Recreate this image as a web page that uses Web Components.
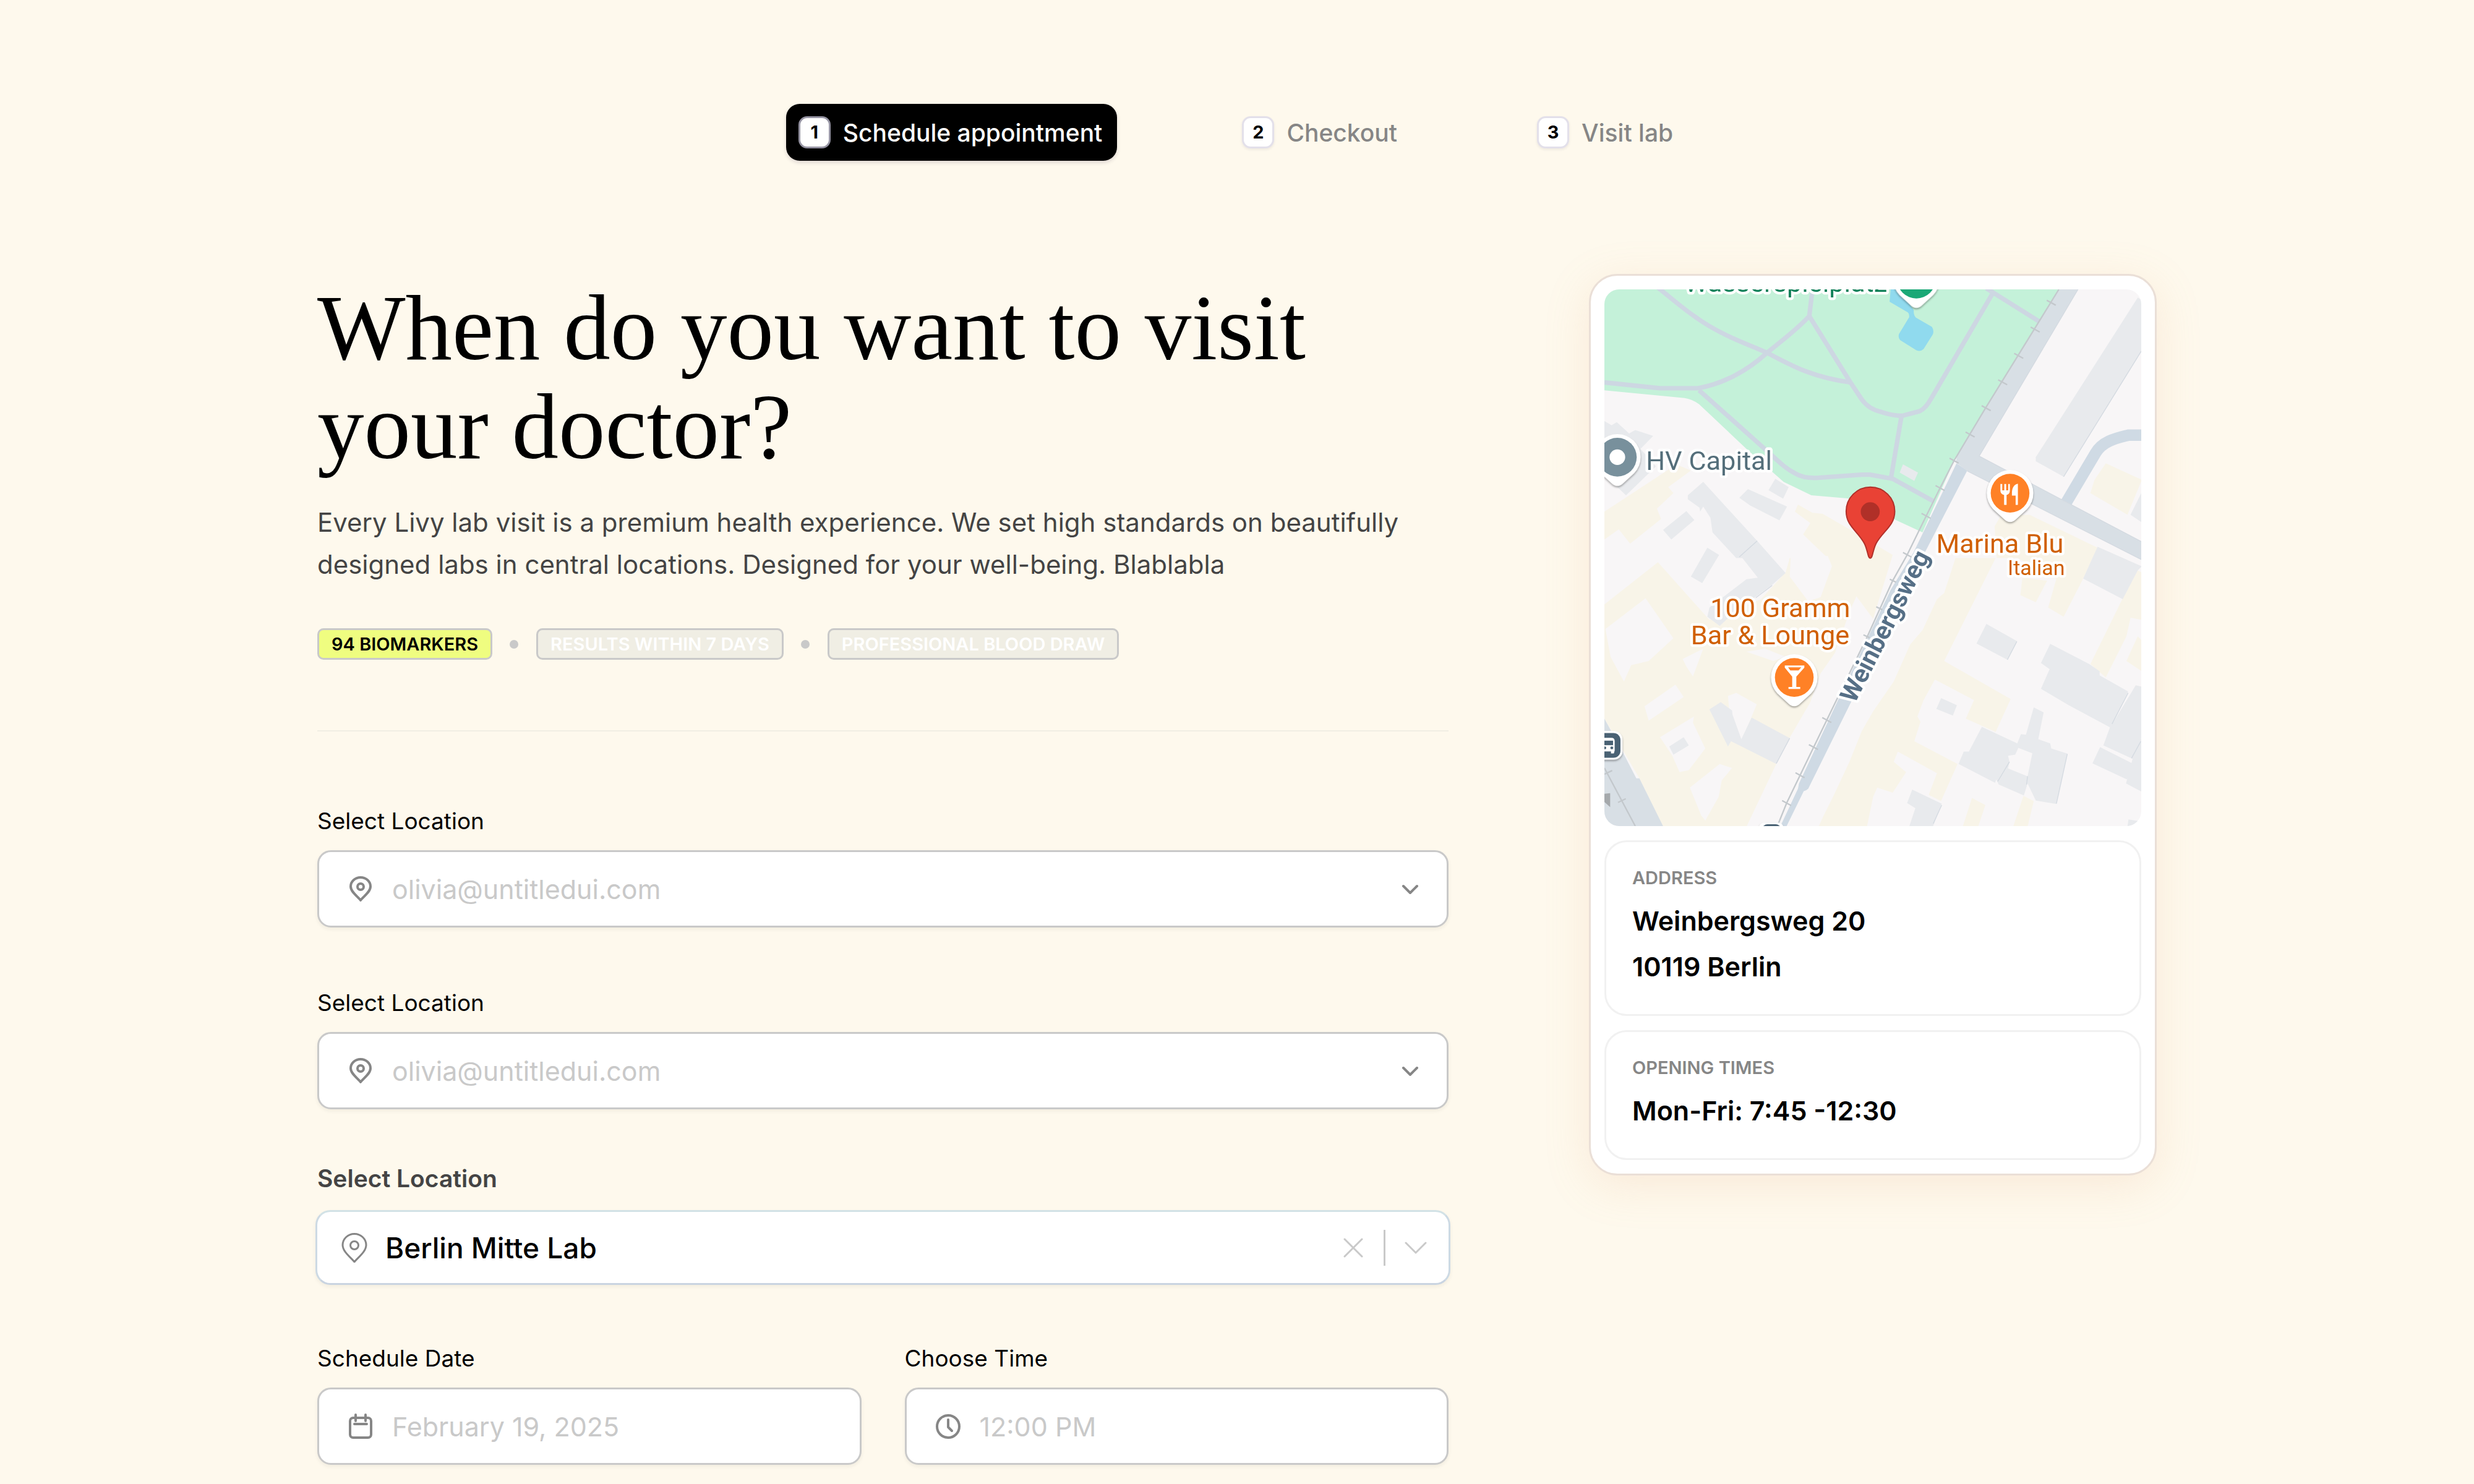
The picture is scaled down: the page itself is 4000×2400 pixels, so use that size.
<!DOCTYPE html>
<html lang="en">
<head>
<meta charset="utf-8">
<meta name="viewport" content="width=device-width, initial-scale=1">
<title>Schedule appointment</title>
<style>
  body {
    margin: 0;
    background: #fef9ed;
    color: #000;
    font-family: Inter, "Liberation Sans", sans-serif;
    --line: #c9c9c9;
    --muted: #868686;
    --text: #444;
  }
</style>
</head>
<body>
<booking-page>
  <step-list slot="steps">
    <step-item number="1" active>Schedule appointment</step-item>
    <step-item number="2">Checkout</step-item>
    <step-item number="3">Visit lab</step-item>
  </step-list>

  <page-intro>
    <span slot="title">When do you want to visit your doctor?</span>
    Every Livy lab visit is a premium health experience. We set high standards on beautifully designed labs in central locations. Designed for your well-being. Blablabla
    <lab-tag slot="tags" active>94 BIOMARKERS</lab-tag>
    <lab-tag slot="tags">RESULTS WITHIN 7 DAYS</lab-tag>
    <lab-tag slot="tags">PROFESSIONAL BLOOD DRAW</lab-tag>
  </page-intro>

  <booking-form></booking-form>

  <lab-card slot="aside">
    <lab-map></lab-map>
    <info-block label="ADDRESS">Weinbergsweg 20<br>10119 Berlin</info-block>
    <info-block label="OPENING TIMES">Mon-Fri: 7:45 -12:30</info-block>
  </lab-card>
</booking-page>

<template id="booking-page">
  <style>
    :host {
      display: block;
      padding: 168px 40px 28px;
    }
    .layout {
      display: grid;
      grid-template-columns: minmax(0, 1829fr) minmax(0, 918fr);
      gap: 227px;
      align-items: start;
      max-width: 2974px;
      margin: 183px auto 0;
    }
  </style>
  <slot name="steps"></slot>
  <div class="layout">
    <main><slot></slot></main>
    <aside><slot name="aside"></slot></aside>
  </div>
</template>

<template id="step-list">
  <style>
    :host { display: block; }
    nav {
      display: flex;
      justify-content: center;
      gap: 182px;
    }
  </style>
  <nav aria-label="Progress"><slot></slot></nav>
</template>

<template id="step-item">
  <style>
    :host { display: block; }
    a {
      display: flex;
      align-items: center;
      gap: 20px;
      height: 92px;
      padding: 0 24px 0 20px;
      border-radius: 22px;
      color: var(--muted);
      font-size: 39px;
      font-weight: 500;
      text-decoration: none;
      white-space: nowrap;
    }
    b {
      box-sizing: border-box;
      width: 52px;
      height: 52px;
      border: 3px solid #e3e0ea;
      border-radius: 14px;
      background: #fff;
      color: #000;
      font-size: 29px;
      font-weight: 700;
      line-height: 46px;
      text-align: center;
      box-shadow: 0 2px 4px rgba(30, 20, 60, .08);
    }
    :host([active]) a {
      background: #000;
      color: #fff;
      box-shadow: 0 3px 6px rgba(40, 20, 60, .15);
    }
    :host([active]) b { border-color: #9694a3; }
  </style>
  <a href="#"><b></b><span><slot></slot></span></a>
</template>

<template id="page-intro">
  <style>
    :host {
      display: block;
      padding: 7px 0 114px;
      border-bottom: 2px solid #f1eee3;
    }
    h1 {
      margin: 0;
      font: 400 151px/160px "Liberation Serif", serif;
    }
    p {
      margin: 41px 0 69px;
      color: var(--text);
      font-size: 42px;
      line-height: 68px;
    }
    .tags {
      display: flex;
      gap: 71px;
    }
  </style>
  <h1><slot name="title"></slot></h1>
  <p><slot></slot></p>
  <div class="tags"><slot name="tags"></slot></div>
</template>

<template id="lab-tag">
  <style>
    :host {
      position: relative;
      padding: 0 20px;
      border: 3px solid var(--line);
      border-radius: 10px;
      background: #f0eee4;
      color: #fff;
      font-size: 29px;
      font-weight: 600;
      line-height: 45px;
      white-space: nowrap;
    }
    :host([active]) {
      background: #effd80;
      color: #000;
    }
    /* dot halfway between two tags */
    :host(:not([active]))::before {
      content: "";
      position: absolute;
      top: 16px;
      left: -46px;
      width: 14px;
      height: 14px;
      border-radius: 50%;
      background: var(--line);
    }
  </style>
  <slot></slot>
</template>

<template id="booking-form">
  <style>
    :host { display: block; padding-top: 115px; }
    form { display: grid; }
    .fields { display: grid; gap: 92px; }
    pick-field { margin: 82px -3px 0; }
    .row {
      display: grid;
      grid-template-columns: 1fr 1fr;
      gap: 70px;
      margin-top: 89px;
    }
  </style>
  <form>
    <div class="fields">
      <form-field kind="select" icon="pin" label="Select Location" value="olivia@untitledui.com"></form-field>
      <form-field kind="select" icon="pin" label="Select Location" value="olivia@untitledui.com"></form-field>
    </div>
    <pick-field label="Select Location" value="Berlin Mitte Lab"></pick-field>
    <div class="row">
      <form-field kind="text" icon="calendar" label="Schedule Date" value="February 19, 2025"></form-field>
      <form-field kind="text" icon="clock" label="Choose Time" value="12:00 PM"></form-field>
    </div>
  </form>
</template>

<template id="form-field">
  <style>
    :host { display: block; }
    label {
      display: block;
      margin-bottom: 17px;
      font-size: 37px;
      line-height: 60px;
    }
    .box {
      display: flex;
      align-items: center;
      box-sizing: border-box;
      height: 125px;
      padding: 0 36px 0 44px;
      border: 3px solid var(--line);
      border-radius: 22px;
      background: #fff;
      box-shadow: 0 3px 6px rgba(40, 30, 20, .06);
    }
    svg {
      flex: none;
      width: 46px;
      height: 46px;
      fill: none;
      stroke: var(--muted);
      stroke-width: 4;
      stroke-linecap: round;
      stroke-linejoin: round;
    }
    select, input {
      flex: 1;
      min-width: 0;
      margin: 0 0 0 28px;
      padding: 0;
      border: 0;
      outline: 0;
      appearance: none;
      background: none;
      color: var(--line);
      font: 400 43px/60px Inter, "Liberation Sans", sans-serif;
    }
    input::placeholder { color: var(--line); opacity: 1; }
  </style>
  <label for="control"></label>
  <div class="box"></div>
</template>

<template id="pick-field">
  <style>
    :host { display: block; }
    label {
      display: block;
      margin: 0 3px 21px;
      color: var(--text);
      font-size: 39px;
      font-weight: 600;
      line-height: 60px;
    }
    .box {
      display: flex;
      align-items: center;
      box-sizing: border-box;
      height: 121px;
      padding: 0 29px 0 36px;
      border: 3px solid;
      border-color: #d2e2e6 #cddae4 #c9d4e1;
      border-radius: 24px;
      background: #fff;
      box-shadow: 0 3px 6px rgba(40, 30, 20, .06);
    }
    svg {
      display: block;
      flex: none;
      width: 48px;
      height: 48px;
      fill: none;
      stroke: var(--line);
      stroke-width: 3;
      stroke-linecap: round;
      stroke-linejoin: round;
    }
    .pin { stroke: var(--muted); }
    select {
      flex: 1;
      min-width: 0;
      margin: 0 0 0 26px;
      padding: 0;
      border: 0;
      appearance: none;
      background: none;
      color: #000;
      font: 500 46px/60px Inter, "Liberation Sans", sans-serif;
    }
    button {
      padding: 0;
      border: 0;
      background: none;
    }
    i {
      width: 3px;
      height: 58px;
      margin: 0 25px;
      background: var(--line);
    }
  </style>
  <label for="control"></label>
  <div class="box">
    <svg class="pin" viewBox="0 0 48 48"><path d="M24 47C20 41 5 31 5 19.500a19 18 0 0 1 38 0c0 11.500-15 21.500-19 27.500z"/><circle cx="24" cy="20" r="6.500"/></svg>
    <select id="control"><option></option></select>
    <button type="button" aria-label="Clear"><svg viewBox="0 0 48 48"><path d="M10 10l28 28M38 10L10 38"/></svg></button>
    <i></i>
    <svg viewBox="0 0 48 48"><path d="M8 16l16 16 16-16"/></svg>
  </div>
</template>

<template id="lab-card">
  <style>
    :host {
      display: grid;
      gap: 23px;
      padding: 22px;
      border: 3px solid #eadfd7;
      border-radius: 46px;
      background: #fff;
      box-shadow: 0 16px 72px rgba(225, 160, 110, .17);
    }
  </style>
  <slot></slot>
</template>

<template id="info-block">
  <style>
    :host {
      display: block;
      padding: 38px 42px 24px;
      border: 3px solid #f1f1f1;
      border-radius: 36px;
    }
    h2 {
      margin: 0 0 12px;
      color: var(--muted);
      font-size: 29px;
      font-weight: 600;
      line-height: 40px;
    }
    p {
      margin: 0;
      padding-bottom: 16px;
      font-size: 43px;
      font-weight: 600;
      line-height: 74px;
    }
  </style>
  <h2></h2>
  <p><slot></slot></p>
</template>

<template id="lab-map">
  <style>
    :host { display: block; }
    svg {
      display: block;
      width: 100%;
      border-radius: 24px;
      background: #f8f6f7;
    }
    .park { fill: #c4f1d9; }
    .water { fill: #90daee; }
    .grey { fill: #e8eaed; }
    .cream { fill: #f8f4e8; }
    .gap { fill: #f8f6f7; }
    .road { fill: #d8dfe5; }
    .lane { fill: #cfdae4; }
    .walk { fill: none; stroke: #cdd7e2; stroke-width: 22; stroke-linejoin: round; }
    .rail { fill: none; stroke: #c3c8cc; stroke-width: 7; }
    .edge { fill: none; stroke: #d4dae1; stroke-width: 4; }
    .pin { filter: drop-shadow(0 6px 5px rgba(0, 0, 0, .35)); fill: #fff; }
    text {
      font-family: Roboto, sans-serif;
      font-size: 130px;
      stroke: #fff;
      stroke-width: 26px;
      stroke-linejoin: round;
      paint-order: stroke;
    }
    .food { fill: #d05f00; text-anchor: end; }
  </style>
  <svg viewBox="0 0 2607 2607" role="img" aria-label="Map of Weinbergsweg">
    <defs>
      <path id="drop" d="M0 140C-12 140-20 134-28 127L-82 78A113 113 0 1 1 82 78L28 127C20 134 12 140 0 140Z"/>
    </defs>

    <path class="park" d="M0 0H2210L1698 832L1545 1180L1415 1120L1290 1040L1180 1015L1005 1000L870 935L690 775L460 558Q430 535 390 528L0 490Z"/>
    <path class="grey" d="M1450 850L1523 890L1505 930L1434 890Z"/>
    <path class="water" d="M1390 0L1385 60L1470 110Q1481 115 1480 135L1430 218Q1426 235 1436 246L1515 296Q1535 304 1550 290L1594 220Q1603 200 1590 182L1512 137Q1501 125 1502 100L1430 0Z"/>
    <g class="walk">
      <path d="M260-8C330 45 380 95 480 160S680 260 790 308C900 365 1000 425 1195 452"/>
      <path d="M0 452L270 480H455C570 460 690 400 790 308C860 250 930 200 995 130L1008 20"/>
      <path d="M995 130L1195 452L1250 535Q1285 582 1340 594Q1400 614 1445 614L1530 592Q1560 580 1590 525L1885 20"/>
      <path d="M460 490L790 785C850 840 880 870 925 893Q970 920 1040 915L1250 900H1290L1400 920L1600 1030"/>
      <path d="M1443 614L1392 915M1855-5L2110 155"/>
    </g>

    <!-- buildings, north west -->
    <path class="grey" d="M0 640L35 660L60 645L120 700L150 683L237 712L175 775L250 860L105 1000L0 900Z"/>
    <path class="cream" d="M0 1080L350 850L420 880L310 960L335 990L255 1065L275 1115L125 1235L70 1165L0 1215Z"/>
    <path class="cream" d="M940 1045L1010 1085L1060 1090L1190 1165L1400 1290L1305 1600L1090 1310L965 1190L1000 1135L925 1080Z"/>
    <path class="grey" d="M285 1168L398 1077L437 1120L325 1215ZM655 1012L697 970L887 1055L850 1122L708 1050ZM830 920L895 960L868 1017L797 975Z"/>

    <!-- blocks, south west -->
    <g transform="translate(0 1305)">
      <path class="cream" d="M0 225L260 20L510 300L760 200L880 70L900 0H1305L1290 40L1195 250L1120 460L1050 560L1000 700L890 890L830 1010L690 1305H285L170 1070L0 780Z"/>
      <path class="gap" d="M905-10H1085L1105 40L1050 190L990 210L900 90ZM5 345L200 195L335 390L215 500L130 520L95 600L30 480ZM380 490L480 440L430 575L400 530ZM195 720L345 615L385 675L215 790ZM600 670L640 655L740 710L665 890L610 780ZM270 870L435 770L430 800L490 925L410 1030L365 1040L330 960ZM415 1115L560 1000L620 1020L570 1080L555 1160L490 1275L470 1250ZM690 455L780 440L880 480L820 500Z"/>
      <path class="grey" d="M500-50L557-15L475 122L420 90ZM510 735L565 700L620 740L622 760L665 880L715 775L900 875L835 1000L615 890L600 915ZM315 915L385 870L410 910L335 955Z"/>
    </g>
    <path class="grey" d="M405 1000L480 935L742 1222L880 1378L815 1435L740 1490L650 1550L560 1635L500 1590L510 1545L690 1408L745 1400L670 1305L640 1305L525 1180L515 1110L480 1055L465 1080L462 1060L405 1020Z"/>
    <path class="edge" d="M742 1222L655 1300M815 1438L735 1498M900 2180L835 2303"/>

    <!-- blocks, south east -->
    <g transform="translate(1305 1305)">
      <path class="cream" d="M400 0H595L345 500L668 685L595 845L450 780L490 690L300 590L245 690L215 770L230 795L200 890L410 1000L330 1180L270 1150L310 1045L120 940L100 990L160 1040L95 1140L20 1115L0 1160L-30 1305H-265L-240 1250L-190 1150L-115 990L-55 840L0 745L100 600L180 420L240 350L310 200L345 170Z"/>
      <path class="cream" d="M725 95L845 110L790 215L715 180ZM600 0L590-155L620-205L760-210L1090-50L1020 100L925 285L850 240L890 100L700 0ZM1285 60L1305 70V300L1250 290L1230 380L1130 580L1055 515L1210 200ZM1285 380L1305 400V550L1230 500ZM480 1165L545 1200L510 1305H435ZM730 1155L780 1180L750 1305H680Z"/>
      <path class="cream" d="M1130-460L1305-380L1235-210L1055-315L1075-380Z"/>
      <path class="grey" d="M1065 0L1090-55L1305 40L1285 60L1212 200L1020 100ZM550 320L698 403L652 494L502 415ZM860 417L1050 515L1100 550V570L1238 648L1160 808L1305 880V1135L1228 1095L1260 975L1118 910L1150 822L950 715L815 635L857 540L815 510ZM1275 618L1305 625V880L1160 808L1250 660ZM1102 918L1270 1003L1232 1075L1065 997ZM330 680L407 715L387 765L307 733ZM780 725L828 750L802 880L860 900L865 925L943 950L890 1195L790 1178L750 1095L732 1153L610 1100L598 1075L592 1092L415 1000L440 940H465L528 820L700 900L718 855L742 858ZM190 1125L333 1193L290 1305H175L205 1215L165 1190ZM1240 1270L1305 1280V1305H1235Z"/>
      <path class="gap" d="M705 922L773 948L750 1060L655 1022L662 990L655 960L690 955Z"/>
      <path class="edge" d="M1238 655L1160 806M1300 890L1255 972M652 494L698 405M662 990L605 1085M750 1060L745 1100M943 952L890 1193M333 1200L292 1290"/>
    </g>
    <path class="grey" d="M2590 40L2607 50V300L2230 910L2095 835V815Z"/>
    <path class="edge" d="M2607 300L2230 910"/>
    <path class="grey" d="M2607 990L2555 1095L2607 1130Z"/>

    <!-- streets -->
    <path d="M2240 1040L2385 795C2420 735 2490 722 2545 708H2615" fill="none" stroke="#cfdae4" stroke-width="56"/>
    <path class="lane" d="M1710 845L1762 880L1550 1290L1490 1400L1200 2000L990 2425Q980 2435 968 2437L885 2607H855L940 2425L945 2400L1130 2005L1390 1460L1500 1280Z"/>
    <path class="road" d="M2210 0H2300L1820 810L2607 1225V1312L1762 882L1706 840L1715 800Z"/>
    <path class="edge" d="M2300 0L1820 810L2607 1225M1762 882L2607 1312"/>
    <path class="road" d="M0 2085L80 2230L155 2375H170L285 2607H0Z"/>
    <path class="rail" d="M2207 0L1850 578L1698 832L1630 965L1563 1100L1470 1290L1400 1415L1275 1690L1080 2092L885 2495L840 2607M0 2325L150 2607"/>
    <path class="rail" d="M2148 53l44 24M2070 183l44 24M1990 311l44 24M1912 439l44 24M1832 565l44 24M1754 693l44 24M1676 820l44 24M1608 953l44 24M1540 1088l44 24M1450 1278l44 24M1386 1408l30 14M1320 1542l30 14M1258 1678l30 14M1058 2080l44 24M993 2211l44 24M928 2348l44 24M863 2483l44 24M0 2355l38-18M66 2492l38-18"/>
    <path d="M0 2450L28 2447V2515L0 2490Z" fill="#a5a9ac"/>

    <g class="pin">
      <use href="#drop" x="1515" y="-50"/>
      <use href="#drop" x="63" y="815"/>
      <use href="#drop" x="1970" y="990"/>
      <use href="#drop" x="922" y="1885"/>
      <rect x="-60" y="2145" width="148" height="140" rx="42"/>
      <rect x="750" y="2590" width="120" height="60" rx="26"/>
    </g>
    <circle cx="1515" cy="-50" r="94" fill="#1aa876"/>
    <circle cx="63" cy="815" r="94" fill="#78909c"/>
    <circle cx="63" cy="815" r="38" fill="#fff"/>
    <circle cx="1970" cy="990" r="94" fill="#ff8126"/>
    <circle cx="922" cy="1885" r="94" fill="#ff8126"/>
    <path transform="translate(1970 990)" fill="#fff" d="M-47-45H-38V-14H-28V-45H-19V-14H-9V-45H-1V-12Q-1 4-17 9V57H-29V9Q-47 4-47-12ZM38-46V57H27V12H9V0C9-24 18-42 38-46Z"/>
    <path transform="translate(922 1885)" fill="#fff" fill-rule="evenodd" d="M-46-58H49V-48L10-4V46H29V56H-28V46H-10V-4L-46-48ZM-30-49L-19-34H21L34-49Z"/>
    <rect x="-50" y="2155" width="128" height="120" rx="34" fill="#4a6274"/>
    <path fill="#fff" d="M0 2178H34Q50 2178 50 2194V2240L46 2254H32V2244H0Z"/>
    <path fill="#4a6274" d="M0 2192H42V2214H0Z"/>
    <circle cx="36" cy="2227" r="7" fill="#4a6274"/>
    <circle cx="2" cy="2227" r="7" fill="#4a6274"/>
    <rect x="768" y="2598" width="88" height="60" rx="24" fill="#4a6274"/>

    <path d="M1291 1306C1279 1306 1280 1270 1263 1235C1232 1175 1174 1150 1174 1078A117 117 0 0 1 1410 1078C1410 1150 1350 1175 1319 1235C1302 1270 1303 1306 1291 1306Z" fill="#e94235" stroke="#b1302a" stroke-width="6"/>
    <circle cx="1291" cy="1080" r="46" fill="#b03028"/>

    <text x="388" y="13" fill="#12815a">Wasserspielplatz</text>
    <text x="202" y="878" fill="#546e7a">HV Capital</text>
    <text class="food" x="2230" y="1279">Marina Blu</text>
    <text class="food" x="2236" y="1387" style="font-size: 102px">Italian</text>
    <text class="food" x="1194" y="1593">100 Gramm</text>
    <text class="food" x="1190" y="1724">Bar &amp; Lounge</text>
    <text transform="translate(1216 2014) rotate(-63)" fill="#566f86" style="font-size: 122px; font-weight: 700">Weinbergsweg</text>
  </svg>
</template>

<script>
const icons = {
  pin: `<path d="M23 41C19 35 7 28 7 18.500a16 14.500 0 0 1 32 0C39 28 27 35 23 41z"/><circle cx="23" cy="19" r="5"/>`,
  calendar: `<rect x="6" y="9" width="34" height="32" rx="5"/><path d="M15 4v10M31 4v10M13 19h20"/>`,
  clock: `<circle cx="23" cy="23" r="18"/><path d="M23 12v12l6 6"/>`,
  chevron: `<path d="M12 18l11 11 11-11"/>`,
};

function svg(name) {
  return `<svg viewBox="0 0 46 46" aria-hidden="true">${icons[name]}</svg>`;
}

class TemplateElement extends HTMLElement {
  constructor() {
    super();
    const template = document.getElementById(this.localName);
    this.attachShadow({ mode: "open" });
    this.shadowRoot.appendChild(template.content.cloneNode(true));
  }
}

class StepItem extends TemplateElement {
  connectedCallback() {
    this.shadowRoot.querySelector("b").textContent = this.getAttribute("number");
    if (this.hasAttribute("active")) {
      this.shadowRoot.querySelector("a").setAttribute("aria-current", "step");
    }
  }
}

class InfoBlock extends TemplateElement {
  connectedCallback() {
    this.shadowRoot.querySelector("h2").textContent = this.getAttribute("label");
  }
}

class FormField extends TemplateElement {
  connectedCallback() {
    const value = this.getAttribute("value");
    const box = this.shadowRoot.querySelector(".box");
    this.shadowRoot.querySelector("label").textContent = this.getAttribute("label");
    if (this.getAttribute("kind") === "select") {
      box.innerHTML = `${svg(this.getAttribute("icon"))}
        <select id="control"><option>${value}</option></select>
        ${svg("chevron")}`;
    } else {
      box.innerHTML = `${svg(this.getAttribute("icon"))}
        <input id="control" type="text" placeholder="${value}">`;
    }
  }
}

class PickField extends TemplateElement {
  connectedCallback() {
    const option = this.shadowRoot.querySelector("option");
    this.shadowRoot.querySelector("label").textContent = this.getAttribute("label");
    option.textContent = this.getAttribute("value");
    this.shadowRoot.querySelector("button").addEventListener("click", () => {
      option.textContent = "";
    });
  }
}

window.customElements.define("booking-page", class extends TemplateElement {});
window.customElements.define("step-list", class extends TemplateElement {});
window.customElements.define("step-item", StepItem);
window.customElements.define("page-intro", class extends TemplateElement {});
window.customElements.define("lab-tag", class extends TemplateElement {});
window.customElements.define("form-field", FormField);
window.customElements.define("pick-field", PickField);
window.customElements.define("booking-form", class extends TemplateElement {});
window.customElements.define("lab-map", class extends TemplateElement {});
window.customElements.define("info-block", InfoBlock);
window.customElements.define("lab-card", class extends TemplateElement {});
</script>
</body>
</html>
